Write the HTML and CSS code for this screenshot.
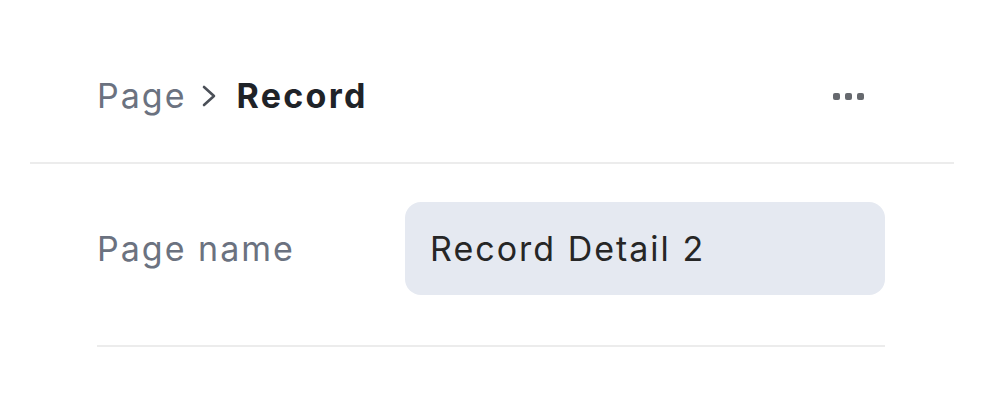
FILE: index.html
```html
<!DOCTYPE html>
<html lang="en">

<head>
    <meta charset="UTF-8">
    <meta name="viewport" content="width=device-width, initial-scale=1.0">
    <title>Page settings</title>
    <link rel="stylesheet" href="styles.css">
</head>

<body>
    <div class="panel">
        <header class="panel-header">
            <nav class="breadcrumb">
                <span class="crumb">Page</span>
                <svg class="crumb-sep" viewBox="0 0 22 24" width="22" height="24" aria-hidden="true">
                    <path d="M6 3 L16 12 L6 21" fill="none" stroke="#4b5058" stroke-width="2.6" stroke-linecap="round" stroke-linejoin="round" />
                </svg>
                <span class="crumb current">Record</span>
            </nav>
            <button class="more-button" aria-label="More">
                <span class="dot"></span><span class="dot"></span><span class="dot"></span>
            </button>
        </header>

        <div class="field-row">
            <label class="field-label" for="page-name">Page name</label>
            <input class="field-input" id="page-name" type="text" value="Record Detail 2">
        </div>
    </div>
</body>

</html>
```

FILE: styles.css
```css
/* Reset */
* {
    margin: 0;
    padding: 0;
    box-sizing: border-box;
}

body {
    font-family: 'Inter', 'Noto Sans', sans-serif;
    background-color: #ffffff;
    color: #1f2328;
}

.panel {
    margin: 0 30px;
}

/* Header with breadcrumb */
.panel-header {
    display: flex;
    align-items: center;
    justify-content: space-between;
    padding: 72px 69px 42px 67px;
    border-bottom: 2px solid #ececec;
}

.breadcrumb {
    display: flex;
    align-items: center;
    gap: 12px;
    height: 48px;
}

.crumb {
    font-size: 34px;
    line-height: 48px;
    letter-spacing: 2px;
    color: #6b7280;
}

.crumb-sep {
    margin-right: 4px;
}

.crumb.current {
    color: #1f2328;
    font-weight: 650;
    letter-spacing: 2.3px;
}

.more-button {
    display: flex;
    align-items: center;
    gap: 5px;
    padding: 10px 21px 10px 10px;
    background: none;
    border: none;
    cursor: pointer;
}

.dot {
    width: 7px;
    height: 7px;
    border-radius: 2px;
    background-color: #66696e;
}

/* Form row */
.field-row {
    display: grid;
    grid-template-columns: 308px 1fr;
    align-items: center;
    margin: 0 69px 0 67px;
    padding: 38px 0 50px;
    border-bottom: 2px solid #ececec;
}

.field-label {
    font-size: 34px;
    line-height: 48px;
    letter-spacing: 2px;
    color: #6b7280;
}

.field-input {
    height: 93px;
    width: 100%;
    padding: 0 25px;
    font-family: inherit;
    font-size: 34px;
    letter-spacing: 2px;
    color: #262626;
    background-color: #e5e9f1;
    border: none;
    border-radius: 16px;
    outline: none;
}
```
